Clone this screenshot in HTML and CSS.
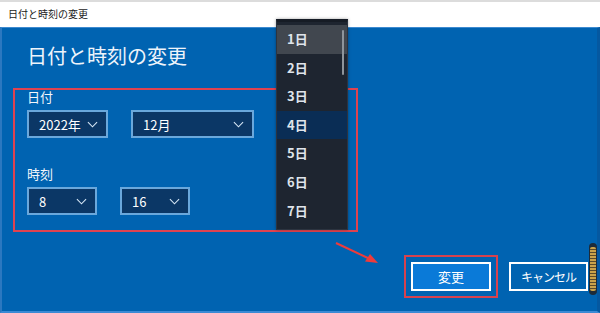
FILE: index.html
```html
<!DOCTYPE html>
<html lang="ja">
<head>
<meta charset="utf-8">
<title>日付と時刻の変更</title>
<link rel="stylesheet" href="styles.css">
</head>
<body>
<div class="window">
  <div class="titlebar">日付と時刻の変更</div>
  <div class="main">
    <h1 class="heading">日付と時刻の変更</h1>
    <div class="label label-date">日付</div>
    <div class="row">
      <div class="select w-year"><span>2022年</span><svg class="chev" viewBox="0 0 12 7"><path d="M1 1l5 5 5-5" /></svg></div>
      <div class="select w-month"><span>12月</span><svg class="chev" viewBox="0 0 12 7"><path d="M1 1l5 5 5-5" /></svg></div>
    </div>
    <div class="label label-time">時刻</div>
    <div class="row">
      <div class="select w-time"><span>8</span><svg class="chev" viewBox="0 0 12 7"><path d="M1 1l5 5 5-5" /></svg></div>
      <div class="select w-time"><span>16</span><svg class="chev" viewBox="0 0 12 7"><path d="M1 1l5 5 5-5" /></svg></div>
    </div>
    <div class="footer">
      <button class="btn btn-primary">変更</button>
      <button class="btn btn-cancel">キャンセル</button>
    </div>
    <div class="mark-box"></div>
    <svg class="arrow" viewBox="0 0 60 30" width="60" height="30">
      <path d="M2 2 L36 18" class="arrow-line"/>
      <path d="M44 22 L31 20.5 L36 13 Z" class="arrow-head"/>
    </svg>
    <div class="side-meter"><div class="meter-inner"></div></div>
  </div>
  <ul class="daylist">
    <li class="hover">1日</li>
    <li>2日</li>
    <li>3日</li>
    <li class="selected">4日</li>
    <li>5日</li>
    <li>6日</li>
    <li>7日</li>
  </ul>
  <div class="scrollthumb"></div>
</div>
</body>
</html>
```
FILE: styles.css
```css
* { box-sizing: border-box; }
html, body { margin: 0; padding: 0; }
body {
  width: 600px;
  height: 313px;
  overflow: hidden;
  font-family: "Noto Sans CJK JP", "Noto Sans", sans-serif;
}
.window {
  position: relative;
  width: 600px;
  height: 313px;
  display: flex;
  flex-direction: column;
}
.titlebar {
  height: 27px;
  flex: none;
  background: #ffffff;
  border-top: 2px solid #dcdcdc;
  padding-left: 8px;
  font-size: 10px;
  line-height: 23px;
  color: #1a1a1a;
}
.main {
  position: relative;
  flex: 1;
  background: #0063b1;
  border-top: 1px solid #3d8ad0;
  border-left: 2px solid #2b78c0;
  border-right: 3px solid #0558a0;
  border-bottom: 2px solid #3b8ad4;
  padding-left: 25px;
  display: flex;
  flex-direction: column;
}
.heading {
  margin: 14px 0 0 0;
  font-size: 20px;
  font-weight: 400;
  line-height: 28px;
  color: #eef4fb;
}
.label {
  font-size: 13px;
  line-height: 18px;
  color: #f2f6fb;
}
.label-date { margin-top: 18px; }
.label-time { margin-top: 27px; }
.row {
  display: flex;
  gap: 23px;
  margin-top: 4px;
}
.select {
  height: 28px;
  background: #0b3766;
  border: 2px solid #6aa8dc;
  display: flex;
  align-items: center;
  justify-content: space-between;
  padding: 0 8px 0 10px;
  font-size: 13px;
  color: #ffffff;
}
.w-year { width: 81px; }
.w-month { width: 123px; }
.w-time { width: 70px; }
.chev {
  width: 11px;
  height: 7px;
  fill: none;
  stroke: #d6e6f5;
  stroke-width: 1.2;
}
.footer {
  margin-top: auto;
  margin-bottom: 20px;
  display: flex;
  justify-content: flex-end;
  gap: 18px;
  padding-right: 9px;
}
.btn {
  height: 29px;
  width: 79px;
  border: 2px solid #ffffff;
  background: transparent;
  color: #ffffff;
  font-family: "Noto Sans CJK JP", "Noto Sans", sans-serif;
  font-size: 13px;
  padding: 0;
}
.btn-cancel {
  font-size: 12px;
  letter-spacing: -1px;
}
.btn-primary {
  width: 80px;
  background: #0a7ad8;
  outline: 2px solid #d8424e;
  outline-offset: 5px;
}
.mark-box {
  position: absolute;
  left: 11px;
  top: 60px;
  width: 345px;
  height: 144px;
  border: 2px solid #df4350;
}
.arrow {
  position: absolute;
  left: 332px;
  top: 213px;
}
.arrow-line {
  stroke: #ee3b3b;
  stroke-width: 2;
  fill: none;
}
.arrow-head { fill: #ee3b3b; }
.side-meter {
  position: absolute;
  right: 0px;
  top: 215px;
  width: 8px;
  height: 52px;
  background: #1c2b3a;
  border-radius: 4px;
  padding: 4px 1px;
}
.meter-inner {
  width: 100%;
  height: 100%;
  background: repeating-linear-gradient(to bottom, #c9a24a 0 2px, #5a4a2a 2px 3px);
  border-radius: 2px;
}
.daylist {
  position: absolute;
  left: 276px;
  top: 19px;
  width: 72px;
  height: 211px;
  margin: 0;
  padding: 3px 0 0 0;
  list-style: none;
  background: #1e2530;
  border: 1px solid #2c3440;
  border-top: 3px solid #161c25;
  box-shadow: 0 0 3px rgba(0,0,0,0.35);
}
.daylist li {
  height: 28.6px;
  line-height: 28.6px;
  padding-left: 10px;
  font-size: 13px;
  font-weight: 700;
  color: #dfe4ea;
}
.daylist li.hover { background: #41474f; }
.daylist li.selected { background: #0a2d55; }
.scrollthumb {
  position: absolute;
  left: 342px;
  top: 30px;
  width: 2px;
  height: 45px;
  background: #8e949b;
  border-radius: 1px;
}
```
